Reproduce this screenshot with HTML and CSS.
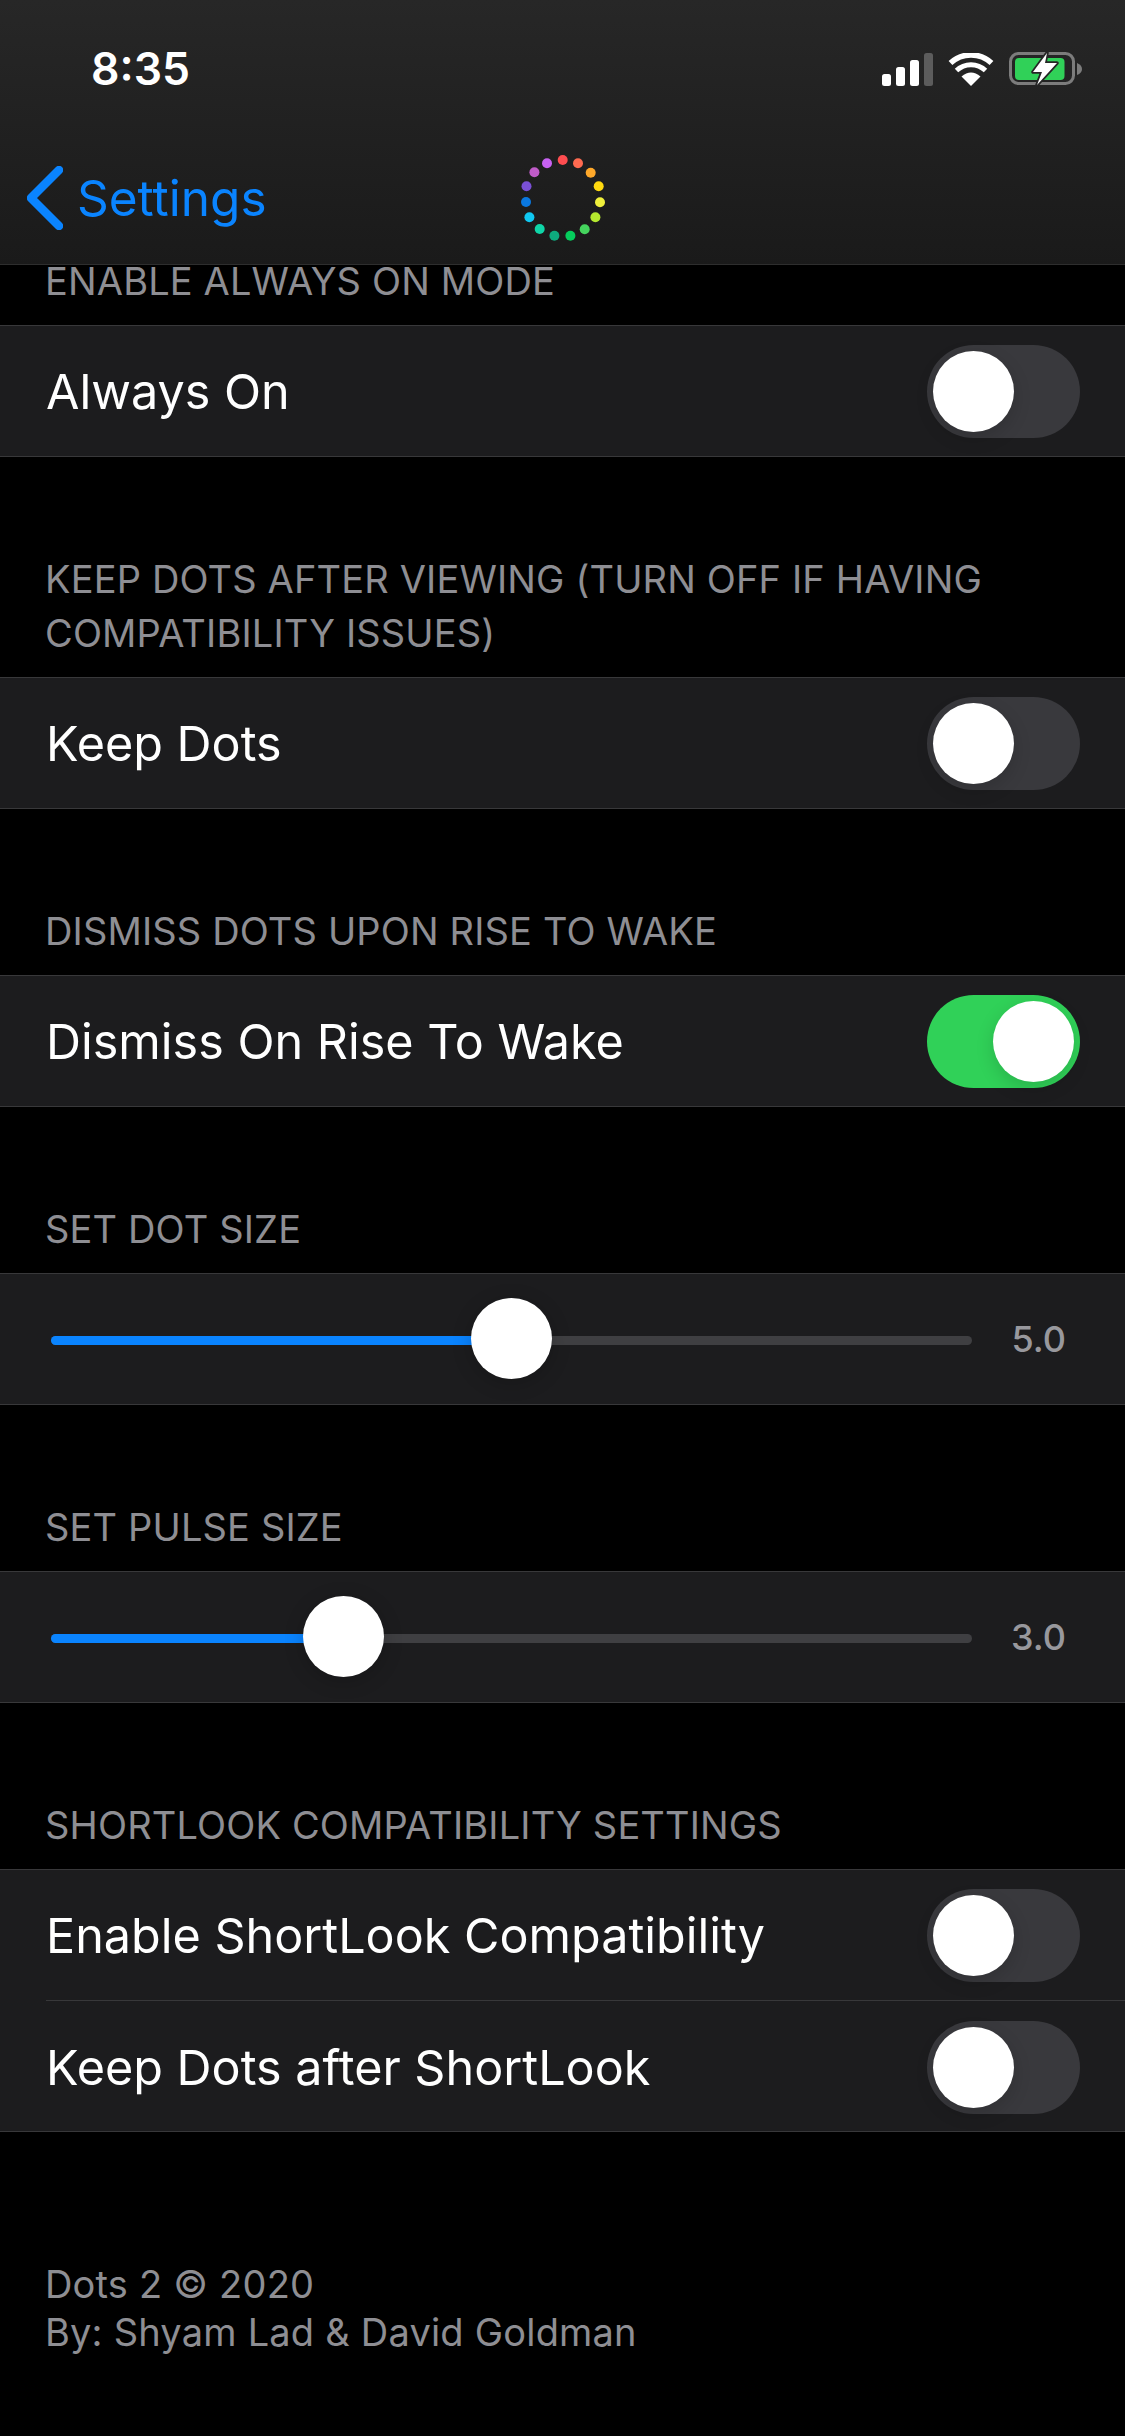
FILE: index.html
```html
<!DOCTYPE html>
<html lang="en">
<head>
    <meta charset="UTF-8">
    <meta name="viewport" content="width=device-width, initial-scale=1.0">
    <title>Dots 2</title>
    <link rel="stylesheet" href="styles.css">
</head>
<body>
    <header class="top">
        <div class="status-bar">
            <span class="time">8:35</span>
            <div class="status-icons">
                <svg class="signal" width="51" height="33" viewBox="0 0 51 33">
                    <rect x="0" y="21" width="9" height="12" rx="2.5" fill="#fff"/>
                    <rect x="14" y="14" width="9" height="19" rx="2.5" fill="#fff"/>
                    <rect x="28" y="7" width="9" height="26" rx="2.5" fill="#fff"/>
                    <rect x="42" y="0" width="9" height="33" rx="2.5" fill="#5c5c5c"/>
                </svg>
                <svg class="wifi" width="46" height="33" viewBox="0 0 46 33">
                    <path d="M23 33 L13.5 23.5 Q23 15.5 32.5 23.5 Z" fill="#fff"/>
                    <path d="M8.5 17.5 A21 21 0 0 1 37.5 17.5" fill="none" stroke="#fff" stroke-width="5"/>
                    <path d="M2.5 10 A30 30 0 0 1 43.5 10" fill="none" stroke="#fff" stroke-width="5.5"/>
                </svg>
                <svg class="battery" width="73" height="34" viewBox="0 0 73 34">
                    <rect x="1.5" y="1.5" width="63" height="30" rx="8" fill="none" stroke="#7c7c7c" stroke-width="3"/>
                    <path d="M68 11 Q73 13 73 17 Q73 21 68 23 Z" fill="#7c7c7c"/>
                    <rect x="6" y="6" width="49.5" height="22" rx="4" fill="#30d158"/>
                    <path d="M38 1 L24 20 L33 20 L28 33 L48 11 L36 11 Z" fill="#fff" stroke="#262626" stroke-width="3.5" stroke-linejoin="round" paint-order="stroke"/>
                </svg>
            </div>
        </div>
        <nav class="nav-bar">
            <div class="back">
                <svg width="36" height="64" viewBox="0 0 36 64">
                    <path d="M32 4 L4 32 L32 60" fill="none" stroke="#0a84ff" stroke-width="8.5" stroke-linecap="round" stroke-linejoin="round"/>
                </svg>
                <span>Settings</span>
            </div>
            <svg class="logo" width="84" height="86" viewBox="0 0 84 86">
                <circle cx="41.7" cy="5" r="5" fill="#ff4d50"/>
                <circle cx="57" cy="8.3" r="5" fill="#ff6a50"/>
                <circle cx="69.7" cy="17.7" r="5" fill="#ffa82a"/>
                <circle cx="77.7" cy="31.3" r="5" fill="#ffd90f"/>
                <circle cx="79" cy="47.3" r="5" fill="#f0f03c"/>
                <circle cx="74.4" cy="62.3" r="5" fill="#b5e82f"/>
                <circle cx="63.7" cy="74.3" r="5" fill="#45d45e"/>
                <circle cx="49.4" cy="80.7" r="5" fill="#05cc5c"/>
                <circle cx="33.4" cy="80.7" r="5" fill="#0eaa7e"/>
                <circle cx="18.7" cy="74" r="5" fill="#0fd6a8"/>
                <circle cx="8.4" cy="62.3" r="5" fill="#10c8f2"/>
                <circle cx="5" cy="47" r="5" fill="#0a78e0"/>
                <circle cx="5.5" cy="31.3" r="5" fill="#7a50d6"/>
                <circle cx="13.4" cy="17.3" r="5" fill="#c05cc8"/>
                <circle cx="26" cy="8.3" r="5" fill="#c862f2"/>
            </svg>
            <div></div>
        </nav>
    </header>

    <main class="list">
        <section class="group">
            <h2 class="group-title">Enable Always On Mode</h2>
            <div class="cell">
                <div class="row"><span>Always On</span><div class="toggle"></div></div>
            </div>
        </section>

        <section class="group">
            <h2 class="group-title">Keep Dots after viewing (Turn off if having compatibility issues)</h2>
            <div class="cell">
                <div class="row"><span>Keep Dots</span><div class="toggle"></div></div>
            </div>
        </section>

        <section class="group">
            <h2 class="group-title">Dismiss Dots upon Rise to Wake</h2>
            <div class="cell">
                <div class="row"><span>Dismiss On Rise To Wake</span><div class="toggle on"></div></div>
            </div>
        </section>

        <section class="group">
            <h2 class="group-title">Set Dot Size</h2>
            <div class="cell">
                <div class="row slider-row">
                    <div class="slider">
                        <div class="slider-fill" style="width: 50%"></div>
                        <div class="slider-knob" style="left: 420px"></div>
                    </div>
                    <span class="slider-value">5.0</span>
                </div>
            </div>
        </section>

        <section class="group">
            <h2 class="group-title">Set Pulse Size</h2>
            <div class="cell">
                <div class="row slider-row">
                    <div class="slider">
                        <div class="slider-fill" style="width: 32%"></div>
                        <div class="slider-knob" style="left: 252px"></div>
                    </div>
                    <span class="slider-value">3.0</span>
                </div>
            </div>
        </section>

        <section class="group">
            <h2 class="group-title">ShortLook Compatibility Settings</h2>
            <div class="cell">
                <div class="row"><span>Enable ShortLook Compatibility</span><div class="toggle"></div></div>
                <div class="row"><span>Keep Dots after ShortLook</span><div class="toggle"></div></div>
            </div>
        </section>

        <footer class="credits">
            Dots 2 © 2020<br>
            By: Shyam Lad &amp; David Goldman
        </footer>
    </main>
</body>
</html>
```

FILE: styles.css
```css
* {
    box-sizing: border-box;
}

body {
    margin: 0;
    width: 1125px;
    height: 2436px;
    overflow: hidden;
    background: #000;
    font-family: Inter, "Liberation Sans", sans-serif;
    color: #fff;
}

.top {
    position: relative;
    z-index: 2;
    height: 265px;
    background: linear-gradient(180deg, #272727 0%, #1a1a1a 100%);
    border-bottom: 1px solid #2e2e2e;
}

.status-bar {
    display: flex;
    justify-content: space-between;
    align-items: center;
    height: 136px;
    padding: 2px 43px 0 91px;
}

.time {
    font-size: 44.5px;
    font-weight: 600;
}

.status-icons {
    display: flex;
    align-items: center;
    gap: 15px;
}

.nav-bar {
    display: grid;
    grid-template-columns: 1fr auto 1fr;
    align-items: center;
    height: 124px;
}

.back {
    display: flex;
    align-items: center;
    gap: 14px;
    padding-left: 27px;
    font-size: 49.5px;
    color: #0a84ff;
}

.list {
    margin-top: -11px;
}

.group {
    margin-bottom: 95px;
}

.group-title {
    margin: 0;
    padding: 0 45px 17px;
    font-size: 38px;
    font-weight: 400;
    line-height: 54px;
    letter-spacing: 0.15px;
    text-transform: uppercase;
    color: #8e8e93;
}

.cell {
    background: #1c1c1e;
    border-top: 1px solid #38383a;
    border-bottom: 1px solid #38383a;
}

.row {
    display: flex;
    justify-content: space-between;
    align-items: center;
    height: 130px;
    margin-left: 46px;
    padding-right: 45px;
    font-size: 48.5px;
}

.row + .row {
    height: 131px;
    padding-top: 2px;
    border-top: 1px solid #38383a;
}

.toggle {
    position: relative;
    width: 153px;
    height: 93px;
    border-radius: 47px;
    background: #39393d;
}

.toggle::after {
    content: "";
    position: absolute;
    top: 6px;
    left: 6px;
    width: 81px;
    height: 81px;
    border-radius: 50%;
    background: #fff;
    box-shadow: 0 6px 18px rgba(0, 0, 0, 0.15);
}

.toggle.on {
    background: #30d158;
}

.toggle.on::after {
    left: 66px;
}

.slider-row {
    margin-left: 51px;
    padding-right: 59px;
}

.slider {
    position: relative;
    width: 921px;
    height: 9px;
    margin-top: 3px;
    border-radius: 5px;
    background: #3f3f42;
}

.slider-fill {
    height: 100%;
    border-radius: 5px;
    background: #0a84ff;
}

.slider-knob {
    position: absolute;
    top: -38px;
    width: 81px;
    height: 81px;
    border-radius: 50%;
    background: #fff;
    box-shadow: 0 4px 20px rgba(0, 0, 0, 0.2);
}

.slider-value {
    font-size: 36px;
    font-weight: 500;
    color: #98989d;
}

.credits {
    padding: 33px 45px 0;
    font-size: 38px;
    line-height: 48px;
    letter-spacing: 0.2px;
    color: #8e8e93;
}
```
